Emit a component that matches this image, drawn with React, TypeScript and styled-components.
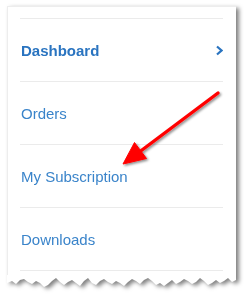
import styled, { createGlobalStyle } from "styled-components";

const GlobalStyle = createGlobalStyle`
  html, body {
    margin: 0;
    padding: 0;
    background: #fff;
  }
  body {
    font-family: "Liberation Sans", Arial, sans-serif;
  }
`;

const Page = styled.div`
  position: relative;
  width: 245px;
  height: 300px;
  overflow: hidden;
  background: #fff;
`;

const Sheet = styled.div`
  margin: 6px 0 0 7px;
  width: 229px;
  filter: drop-shadow(3px 2px 2px rgba(0, 0, 0, 0.5));
`;

const Card = styled.div`
  background: #fff;
  border-top: 1px solid #ededed;
  border-left: 1px solid #ededed;
  padding: 11px 13px 5px 12px;
`;

const Menu = styled.ul`
  list-style: none;
  margin: 0;
  padding: 0;
  border-bottom: 1px solid #ebebeb;
`;

const Item = styled.li<{ $bold?: boolean }>`
  height: 62px;
  border-top: 1px solid #ebebeb;
  display: flex;
  align-items: center;
  justify-content: space-between;
  padding: 0 0 0 1px;
  font-size: 15px;
  font-weight: ${(p) => (p.$bold ? 700 : 400)};
  color: ${(p) => (p.$bold ? "#2a74c0" : "#3a84ca")};
`;

const Torn = styled.svg`
  display: block;
  margin-top: -1px;
`;

const Arrow = styled.svg`
  position: absolute;
  left: 0;
  top: 0;
  pointer-events: none;
`;

const tornPoints = [
  [0, 8], [5, 6], [9, 9], [13, 5], [17, 4], [21, 7], [25, 9], [29, 6], [33, 8],
  [37, 12], [41, 10], [45, 6], [49, 3], [53, 7], [57, 10], [61, 7], [65, 5],
  [69, 8], [73, 11], [77, 6], [81, 3], [85, 8], [89, 10], [93, 6], [97, 4],
  [101, 7], [105, 9], [109, 6], [113, 8], [117, 11], [121, 7], [125, 4],
  [129, 6], [133, 9], [137, 5], [141, 3], [145, 6], [149, 10], [153, 8],
  [157, 11], [161, 8], [165, 5], [169, 9], [173, 7], [177, 4], [181, 6],
  [185, 9], [189, 7], [193, 3], [197, 6], [201, 10], [205, 8], [209, 5],
  [213, 8], [217, 6], [221, 3], [225, 7], [229, 5],
];

const ChevronRight = () => (
  <svg width="8" height="11" viewBox="0 0 8 11">
    <polyline
      points="2,1.5 6.5,5.5 2,9.5"
      fill="none"
      stroke="#2a74c0"
      strokeWidth="2.2"
    />
  </svg>
);

const App = () => {
  const torn =
    "M0 0 H229 " +
    tornPoints
      .slice()
      .reverse()
      .map(([x, y]) => `L${x} ${y}`)
      .join(" ") +
    " Z";

  return (
    <Page>
      <GlobalStyle />
      <Sheet>
        <Card>
          <Menu>
            <Item $bold>
              Dashboard
              <ChevronRight />
            </Item>
            <Item>Orders</Item>
            <Item>My Subscription</Item>
            <Item>Downloads</Item>
          </Menu>
        </Card>
        <Torn width="229" height="13" viewBox="0 0 229 13">
          <path d={torn} fill="#fff" />
        </Torn>
      </Sheet>
      <Arrow width="245" height="300" viewBox="0 0 245 300">
        <defs>
          <filter id="ashadow" x="-20%" y="-20%" width="140%" height="140%">
            <feDropShadow dx="1.5" dy="1.5" stdDeviation="1" floodColor="#000" floodOpacity="0.45" />
          </filter>
        </defs>
        <g filter="url(#ashadow)" fill="#f00" stroke="#f00">
          <line x1="218" y1="93" x2="138" y2="153" strokeWidth="3.4" strokeLinecap="round" />
          <polygon points="123,164 134.5,142.5 146.5,158.5" strokeWidth="1" strokeLinejoin="round" />
        </g>
      </Arrow>
    </Page>
  );
};

export default App;
